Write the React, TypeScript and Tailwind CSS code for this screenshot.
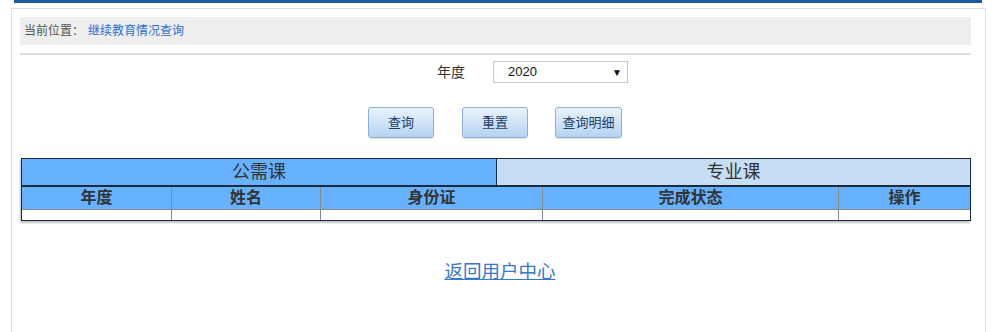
import React from "react";

const font = { fontFamily: '"Liberation Sans", Arial, "Noto Sans CJK SC", sans-serif' };

function Btn({ label, w }: { label: string; w: string }) {
  return (
    <button
      className={`h-[31px] ${w} rounded-[3px] border border-[#8fb0d6] bg-gradient-to-b from-[#eaf3fc] to-[#b5d3f1] text-[13px] text-[#1f3f66] shadow-[0_1px_1px_rgba(0,0,0,0.12)]`}
    >
      {label}
    </button>
  );
}

export default function App() {
  return (
    <div className="w-[995px] h-[332px] bg-white overflow-hidden text-[#333]" style={font}>
      <div className="ml-[14px] w-[968px] h-[3px] bg-[#1d5a9c]" />
      <div className="ml-[11px] mt-[5px] w-[975px] h-[340px] border border-[#dedede] pl-[8px] pt-[8px]">
        <div className="w-[951px] h-[28px] bg-[#eeeeee] flex items-center pl-[4px] text-[12px]">
          <span className="text-[#555]">当前位置：</span>
          <span className="ml-[4px] text-[#2c6fd0]">继续教育情况查询</span>
        </div>
        <div className="mt-[8px] w-[951px] h-[2px] bg-[#dcdcdc]" />
        <div className="mt-[6px] w-[951px] flex items-center">
          <span className="ml-[417px] text-[14px] text-[#333]">年度</span>
          <div className="ml-[28px] w-[135px] h-[22px] border border-[#c8c8c8] bg-white flex items-center justify-between pl-[14px] pr-[5px] text-[13px] text-[#111]">
            <span>2020</span>
            <span className="text-[10px]">▼</span>
          </div>
        </div>
        <div className="mt-[24px] w-[951px] flex items-center">
          <div className="ml-[348px]"><Btn label="查询" w="w-[66px]" /></div>
          <div className="ml-[28px]"><Btn label="重置" w="w-[66px]" /></div>
          <div className="ml-[27px]"><Btn label="查询明细" w="w-[67px]" /></div>
        </div>
        <div className="mt-[20px] ml-[1px] w-[950px] shadow-[-1px_2px_2px_rgba(0,0,0,0.25)]">
          <div className="flex h-[28px] border border-[#1b2b3d] text-[18px] text-[#333]">
            <div className="w-[475px] bg-[#66b2ff] border-r border-[#1b2b3d] flex items-center justify-center">公需课</div>
            <div className="flex-1 bg-[#c6def4] flex items-center justify-center">专业课</div>
          </div>
          <div className="border border-t-0 border-[#1b2b3d]">
            <div className="flex h-[23px] bg-[#66b2ff] text-[16px] font-bold text-[#333] border-t border-[#1b2b3d]">
              <div className="w-[150px] border-r border-[#8a8a8a] flex items-center justify-center">年度</div>
              <div className="w-[149px] border-r border-[#8a8a8a] flex items-center justify-center">姓名</div>
              <div className="w-[222px] border-r border-[#8a8a8a] flex items-center justify-center">身份证</div>
              <div className="w-[296px] border-r border-[#8a8a8a] flex items-center justify-center">完成状态</div>
              <div className="flex-1 flex items-center justify-center">操作</div>
            </div>
            <div className="flex h-[11px] bg-white border-t border-[#8a8a8a]">
              <div className="w-[150px] border-r border-[#8a8a8a]" />
              <div className="w-[149px] border-r border-[#8a8a8a]" />
              <div className="w-[222px] border-r border-[#8a8a8a]" />
              <div className="w-[296px] border-r border-[#8a8a8a]" />
              <div className="flex-1" />
            </div>
          </div>
        </div>
        <div className="mt-[37px] w-[951px] flex justify-center pl-[9px]">
          <a href="#" className="text-[18.5px] text-[#3478d0] underline">返回用户中心</a>
        </div>
      </div>
    </div>
  );
}
